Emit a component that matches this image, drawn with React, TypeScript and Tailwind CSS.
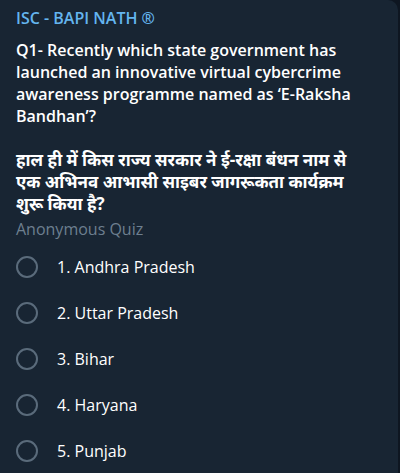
import React from "react";

const options = ["1. Andhra Pradesh", "2. Uttar Pradesh", "3. Bihar", "4. Haryana", "5. Punjab"];

export default function App() {
  return (
    <div className="w-[400px] h-[473px] bg-[#0e1621] overflow-hidden" style={{ fontFamily: '"Open Sans", "Noto Sans", sans-serif' }}>
      <div className="w-[398px] h-[473px] bg-[#182533] rounded-tr-[10px] pl-4 pr-3 pt-[7px]">
        <div className="text-[#64b5ef] text-[16px] font-semibold leading-[22px]">ISC - BAPI NATH ®</div>
        <div className="mt-[10px] text-white text-[16px] font-semibold leading-[22px]">
          Q1- Recently which state government has launched an innovative virtual cybercrime awareness programme named as ‘E-Raksha Bandhan’?
        </div>
        <div className="mt-[22px] text-white text-[17px] font-bold leading-[22px] whitespace-nowrap">
          हाल ही में किस राज्य सरकार ने ई-रक्षा बंधन नाम से
          <br />
          एक अभिनव आभासी साइबर जागरूकता कार्यक्रम
          <br />
          शुरू किया है?
        </div>
        <div className="mt-[3px] text-[#6d7f8f] text-[16px] leading-[22px]">Anonymous Quiz</div>
        <div className="mt-[4px] flex flex-col">
          {options.map((o) => (
            <div key={o} className="h-[46px] flex items-center">
              <div className="w-[22px] h-[22px] rounded-full border-2 border-[#5a6b7b]" />
              <div className="ml-[19px] text-white text-[16px] leading-[22px]">{o}</div>
            </div>
          ))}
        </div>
      </div>
    </div>
  );
}
